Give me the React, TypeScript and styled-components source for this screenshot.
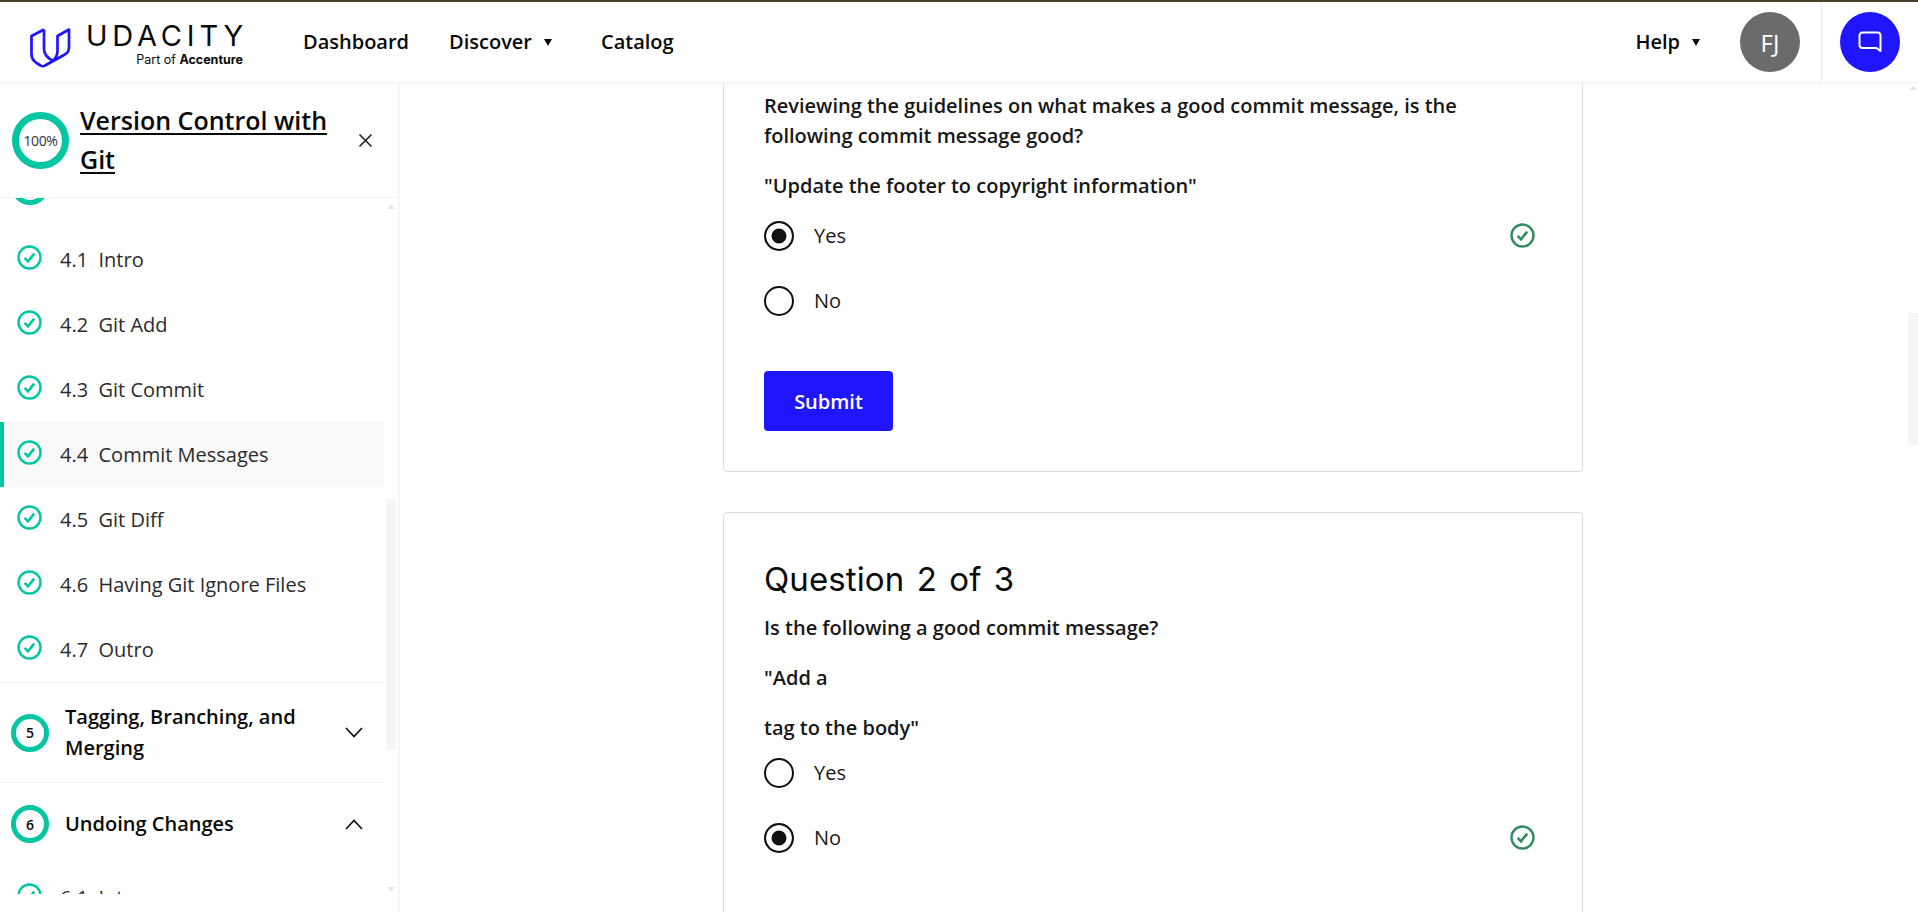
import styled, { createGlobalStyle } from "styled-components";

const GlobalStyle = createGlobalStyle`
  html, body {
    margin: 0;
    padding: 0;
    height: 912px;
    overflow: hidden;
    background: #fff;
    font-family: "Open Sans", "Liberation Sans", sans-serif;
    color: #0a0a0a;
  }
  * { box-sizing: border-box; }
`;

const Page = styled.div`
  height: 912px;
  display: flex;
  flex-direction: column;
`;

const Header = styled.header`
  height: 84px;
  flex: none;
  display: flex;
  align-items: center;
  border-top: 2px solid #4a3f28;
  border-bottom: 2px solid #f5f5f5;
  background: #fff;
`;

const Logo = styled.div`
  width: 303px;
  flex: none;
  padding-left: 30px;
  display: flex;
  gap: 18px;
  align-items: flex-start;
`;

const LogoWords = styled.div`
  display: flex;
  flex-direction: column;
  align-items: flex-end;
  width: 154px;
`;

const LogoName = styled.div`
  font-family: "Inter", sans-serif;
  font-size: 29px;
  line-height: 28px;
  font-weight: 400;
  letter-spacing: 4.8px;
  margin-right: -5px;
  margin-top: 7px;
  white-space: nowrap;
`;

const LogoSub = styled.div`
  font-family: "Inter", sans-serif;
  font-size: 12.5px;
  line-height: 13px;
  margin-top: 3px;
  white-space: nowrap;
  b {
    font-weight: 700;
  }
`;

const Nav = styled.nav`
  display: flex;
  align-items: center;
  gap: 40px;
  flex: 1;
`;

const NavItem = styled.a`
  font-size: 20px;
  font-weight: 600;
  line-height: 28px;
  display: flex;
  align-items: center;
  gap: 12px;
  color: #0a0a0a;
`;

const Caret = styled.span`
  width: 0;
  height: 0;
  border-left: 4.5px solid transparent;
  border-right: 4.5px solid transparent;
  border-top: 7px solid #0a0a0a;
`;

const Avatar = styled.div`
  width: 60px;
  height: 60px;
  border-radius: 50%;
  background: #6b6b6b;
  color: #fff;
  font-size: 24px;
  display: flex;
  align-items: center;
  justify-content: center;
  margin-left: 40px;
`;

const ChatCell = styled.div`
  height: 100%;
  width: 98px;
  margin-left: 20px;
  border-left: 3px solid #f5f5f5;
  padding-left: 17px;
  display: flex;
  align-items: center;
`;

const ChatButton = styled.div`
  width: 60px;
  height: 60px;
  border-radius: 50%;
  background: #2015ff;
  display: flex;
  align-items: center;
  justify-content: center;
`;

const Body = styled.div`
  flex: 1;
  min-height: 0;
  display: flex;
`;

const Sidebar = styled.aside`
  position: relative;
  width: 400px;
  flex: none;
  border-right: 2px solid #f5f5f5;
  display: flex;
  flex-direction: column;
  background: #fff;
`;

const SidebarTop = styled.div`
  height: 114px;
  flex: none;
  border-bottom: 1px solid #f2f2f2;
  display: flex;
  align-items: center;
  padding-left: 12px;
`;

const Ring = styled.div`
  width: 57px;
  height: 57px;
  flex: none;
  border-radius: 50%;
  border: 7px solid #02c5a1;
  font-size: 14px;
  letter-spacing: -0.4px;
  color: #333;
  display: flex;
  align-items: center;
  justify-content: center;
`;

const CourseTitle = styled.a`
  width: 266px;
  margin-left: 11px;
  margin-top: -2px;
  font-size: 25px;
  font-weight: 600;
  line-height: 39px;
  color: #0a0a0a;
  text-decoration: underline;
  text-decoration-thickness: 2px;
  text-underline-offset: 3px;
`;

const CloseButton = styled.div`
  margin-left: 12px;
  display: flex;
`;

const SidebarList = styled.div`
  height: 696px;
  flex: none;
  overflow: hidden;
`;

const SectionRow = styled.div<{ $height: number; $clipped?: boolean; $line?: boolean }>`
  width: 384px;
  height: ${(p) => p.$height}px;
  margin-top: ${(p) => (p.$clipped ? -53 : 0)}px;
  border-bottom: ${(p) => (p.$line ? "1px solid #f2f2f2" : "none")};
  display: flex;
  align-items: center;
  padding-left: 11px;
`;

const SectionBadge = styled.div`
  width: 38px;
  height: 38px;
  flex: none;
  border-radius: 50%;
  border: 5px solid #02c5a1;
  font-size: 14px;
  font-weight: 600;
  display: flex;
  align-items: center;
  justify-content: center;
`;

const SectionTitle = styled.div`
  width: 280px;
  margin-left: 16px;
  font-size: 20px;
  font-weight: 600;
  line-height: 30.5px;
  padding-right: 30px;
`;

const LessonRow = styled.div<{ $active?: boolean }>`
  width: 384px;
  height: 65px;
  display: flex;
  align-items: center;
  padding-left: ${(p) => (p.$active ? 13 : 17)}px;
  border-left: ${(p) => (p.$active ? "4px solid #02c5a1" : "none")};
  background: ${(p) => (p.$active ? "#f9f9f9" : "transparent")};
  font-size: 20px;
  color: #2b2b2b;
  svg {
    margin-bottom: 5px;
  }
`;

const LessonNumber = styled.span`
  margin-left: 18px;
  width: 38.5px;
  flex: none;
`;

const LessonName = styled.span`
  margin-bottom: 1px;
`;

const ScrollThumb = styled.div<{ $top: number; $height: number; $right: number }>`
  position: absolute;
  top: ${(p) => p.$top}px;
  right: ${(p) => p.$right}px;
  width: 10px;
  height: ${(p) => p.$height}px;
  background: #f5f5f5;
`;

const ScrollArrow = styled.div<{ $top: number; $right: number; $down?: boolean }>`
  position: absolute;
  top: ${(p) => p.$top}px;
  right: ${(p) => p.$right}px;
  width: 0;
  height: 0;
  border-left: 4px solid transparent;
  border-right: 4px solid transparent;
  border-${(p) => (p.$down ? "top" : "bottom")}: 4px solid #e6e6e6;
`;

const Main = styled.main`
  position: relative;
  flex: 1;
  min-width: 0;
  overflow: hidden;
  padding-left: 323px;
`;

const Card = styled.section<{ $first?: boolean }>`
  width: 860px;
  margin-top: ${(p) => (p.$first ? -34 : 40)}px;
  padding: 40px 40px ${(p) => (p.$first ? 40 : 120)}px;
  border: 1px solid #dcdcdc;
  border-radius: 4px;
  background: #fff;
`;

const QuestionHeading = styled.h2`
  margin: 0 0 8px;
  font-family: "Inter", sans-serif;
  font-size: 33px;
  line-height: 52px;
  font-weight: 400;
  letter-spacing: 0.1px;
  word-spacing: 3px;
  color: #0a0a0a;
`;

const Prompt = styled.p`
  margin: 0 0 20px;
  font-size: 20px;
  font-weight: 600;
  line-height: 30px;
  color: #171717;
`;

const Options = styled.div<{ $shift: number }>`
  margin-top: ${(p) => p.$shift}px;
  display: flex;
  flex-direction: column;
`;

const OptionRow = styled.label`
  height: 65px;
  display: flex;
  align-items: center;
  font-size: 20px;
  color: #171717;
`;

const Radio = styled.span<{ $checked?: boolean }>`
  width: 30px;
  height: 30px;
  flex: none;
  margin-right: 20px;
  border-radius: 50%;
  border: 2px solid #111;
  background: ${(p) => (p.$checked ? "#111" : "#fff")};
  box-shadow: ${(p) => (p.$checked ? "inset 0 0 0 5.5px #fff" : "none")};
`;

const OptionText = styled.span`
  flex: 1;
`;

const SubmitButton = styled.button`
  display: block;
  width: 129px;
  height: 60px;
  margin-top: 38px;
  border: none;
  border-radius: 4px;
  background: #2015ff;
  color: #fff;
  font-family: inherit;
  font-size: 20px;
  font-weight: 600;
`;

const CheckIcon = ({ color }: { color: string }) => (
  <svg width="25" height="25" viewBox="0 0 25 25" fill="none" style={{ flex: "none" }}>
    <circle cx="12.5" cy="12.5" r="11" stroke={color} strokeWidth="2.4" />
    <path d="M7.6 12.8l3.4 3.6 6.2-7.8" stroke={color} strokeWidth="2.5" />
  </svg>
);

const UdacityMark = () => (
  <svg width="41" height="41" viewBox="0 0 41 41" fill="none" style={{ marginTop: 13, flex: "none" }}>
    <path
      d="M14 1.5L1.5 8v18c0 4 2 7 5 9l4 2.5c1.5 1 3 1 4.5 0L34 27c3-1.5 5-4 5-7.5V1.5L27.5 8v15c0 4-1.5 7-4.5 9.5"
      stroke="#2015ff"
      strokeWidth="2.7"
      strokeLinejoin="round"
    />
    <path d="M14 1.5V21c0 5 3 9 9.5 12" stroke="#2015ff" strokeWidth="2.7" />
  </svg>
);

const Chevron = ({ up }: { up?: boolean }) => (
  <svg width="18" height="11" viewBox="0 0 18 11" fill="none" style={{ flex: "none" }}>
    <path d={up ? "M1 10l8-8.5 8 8.5" : "M1 1l8 8.5 8-8.5"} stroke="#111" strokeWidth="1.7" />
  </svg>
);

const lessons = [
  ["4.1", "Intro"],
  ["4.2", "Git Add"],
  ["4.3", "Git Commit"],
  ["4.4", "Commit Messages"],
  ["4.5", "Git Diff"],
  ["4.6", "Having Git Ignore Files"],
  ["4.7", "Outro"],
];

const Lesson = ({ num, name, active }: { num: string; name: string; active?: boolean }) => (
  <LessonRow $active={active}>
    <CheckIcon color="#02c5a1" />
    <LessonNumber>{num}</LessonNumber>
    <LessonName>{name}</LessonName>
  </LessonRow>
);

const Option = ({ label, checked }: { label: string; checked?: boolean }) => (
  <OptionRow>
    <Radio $checked={checked} />
    <OptionText>{label}</OptionText>
    {checked && (
      <span style={{ display: "flex", marginRight: 7 }}>
        <CheckIcon color="#2e8b62" />
      </span>
    )}
  </OptionRow>
);

export default function App() {
  return (
    <Page>
      <GlobalStyle />
      <Header>
        <Logo>
          <UdacityMark />
          <LogoWords>
            <LogoName>UDACITY</LogoName>
            <LogoSub>
              Part of <b>Accenture</b>
            </LogoSub>
          </LogoWords>
        </Logo>
        <Nav>
          <NavItem>Dashboard</NavItem>
          <NavItem>
            Discover <Caret />
          </NavItem>
          <NavItem style={{ marginLeft: 9 }}>Catalog</NavItem>
        </Nav>
        <NavItem>
          Help <Caret />
        </NavItem>
        <Avatar>FJ</Avatar>
        <ChatCell>
          <ChatButton>
            <svg width="24" height="22" viewBox="0 0 24 22" fill="none">
              <path
                d="M4.5 1.5h15a3 3 0 0 1 3 3v15.5l-4-3h-14a3 3 0 0 1-3-3v-9.5a3 3 0 0 1 3-3z"
                stroke="#fff"
                strokeWidth="2"
                strokeLinejoin="round"
              />
            </svg>
          </ChatButton>
        </ChatCell>
      </Header>
      <Body>
        <Sidebar>
          <SidebarTop>
            <Ring>100%</Ring>
            <CourseTitle>Version Control with Git</CourseTitle>
            <CloseButton>
              <svg width="15" height="15" viewBox="0 0 15 15" fill="none">
                <path d="M1.5 1.5l12 12M13.5 1.5l-12 12" stroke="#222" strokeWidth="1.6" />
              </svg>
            </CloseButton>
          </SidebarTop>
          <SidebarList>
            <SectionRow $height={82} $clipped>
              <SectionBadge>4</SectionBadge>
              <SectionTitle>Add Commits To A Repo</SectionTitle>
            </SectionRow>
            {lessons.map(([num, name]) => (
              <Lesson key={num} num={num} name={name} active={num === "4.4"} />
            ))}
            <SectionRow $height={101} $line style={{ borderTop: "1px solid #f2f2f2" }}>
              <SectionBadge>5</SectionBadge>
              <SectionTitle>Tagging, Branching, and Merging</SectionTitle>
              <Chevron />
            </SectionRow>
            <SectionRow $height={82}>
              <SectionBadge>6</SectionBadge>
              <SectionTitle>Undoing Changes</SectionTitle>
              <Chevron up />
            </SectionRow>
            <Lesson num="6.1" name="Intro" />
          </SidebarList>
          <ScrollThumb $top={415} $height={251} $right={2} />
          <ScrollArrow $top={121} $right={3} />
          <ScrollArrow $top={803} $right={3} $down />
        </Sidebar>
        <Main>
          <Card $first>
            <Prompt>
              Reviewing the guidelines on what makes a good commit message, is the
              <br />
              following commit message good?
            </Prompt>
            <Prompt>"Update the footer to copyright information"</Prompt>
            <Options $shift={-18}>
              <Option label="Yes" checked />
              <Option label="No" />
            </Options>
            <SubmitButton>Submit</SubmitButton>
          </Card>
          <Card>
            <QuestionHeading>Question 2 of 3</QuestionHeading>
            <Prompt>Is the following a good commit message?</Prompt>
            <Prompt>"Add a</Prompt>
            <Prompt>tag to the body"</Prompt>
            <Options $shift={-23}>
              <Option label="Yes" />
              <Option label="No" checked />
            </Options>
          </Card>
          <ScrollThumb $top={229} $height={132} $right={0} />
          <ScrollArrow $top={2} $right={1} />
        </Main>
      </Body>
    </Page>
  );
}
